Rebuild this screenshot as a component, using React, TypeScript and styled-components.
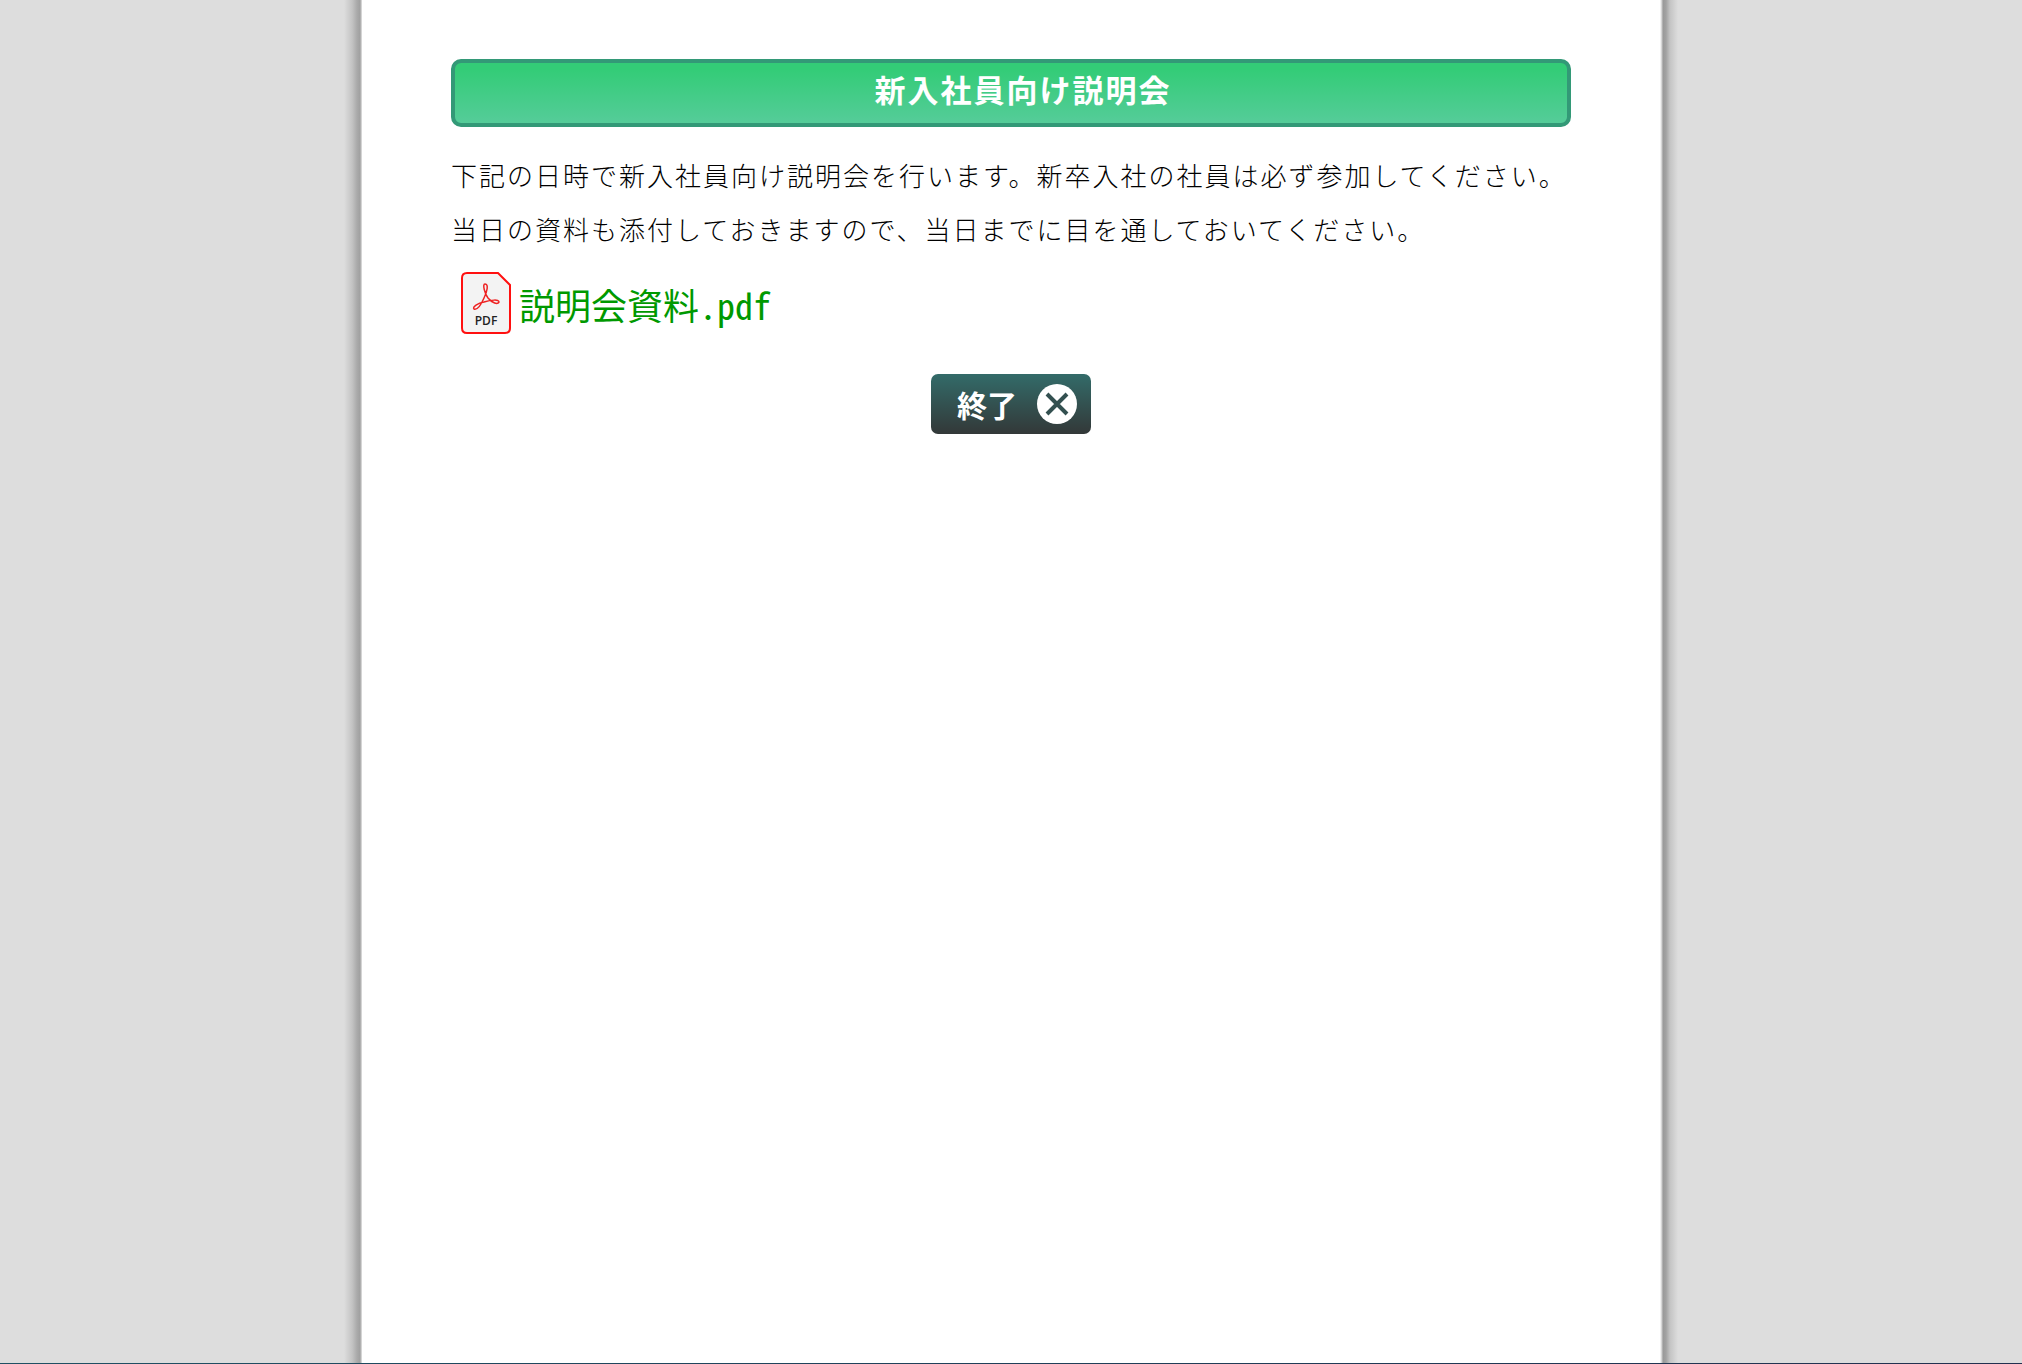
import React from "react";
import styled, { createGlobalStyle } from "styled-components";

const GlobalStyle = createGlobalStyle`
  *, *::before, *::after { box-sizing: border-box; }
  body {
    margin: 0;
    background: #dddddd;
    color: #000000;
    font-family: "Noto Sans CJK JP", sans-serif;
    letter-spacing: 2px;
  }
`;

const Page = styled.div`
  display: flex;
  justify-content: center;
  min-height: 100vh;
  border-bottom: 1px solid;
  border-image: linear-gradient(to right, #1f5063, #22304f) 1;
`;

const edgeShades = {
  left: "#e8e8e8 0, #c0c0c0 1px, #a0a0a0 2px, #aaaaaa 5px, #c4c4c4 10px, #dddddd 18px",
  right: "#ffffff 0, #c8c8c8 2px, #999999 3px, #a2a2a2 6px, #c4c4c4 10px, #dddddd 18px",
};

const Edge = styled.div<{ $side: "left" | "right" }>`
  flex: 0 0 18px;
  background: linear-gradient(
    to ${({ $side }) => $side},
    ${({ $side }) => edgeShades[$side]}
  );
`;

const Sheet = styled.main`
  display: flex;
  flex-direction: column;
  flex: 0 1 1298px;
  min-width: 0;
  padding: 59px 89px;
  background: #ffffff;
`;

const Title = styled.h1`
  margin: 0;
  padding: 4px 0 12px 24px;
  border: 4px solid #339977;
  border-radius: 10px;
  background: linear-gradient(#33cc77 10%, #55cc99);
  color: #ffffff;
  font-size: 31px;
  font-weight: 700;
  line-height: 44px;
  text-align: center;
`;

const Message = styled.p`
  margin: 21px 0 0;
  font-size: 26px;
  font-weight: 300;
  line-height: 54px;
`;

const FileLink = styled.a`
  display: flex;
  align-items: center;
  align-self: flex-start;
  gap: 8px;
  margin: 14px 0 0 10px;
  color: #009900;
  font-family: "Noto Sans Mono CJK JP", "Noto Sans CJK JP", monospace;
  font-size: 36px;
  line-height: 64px;
  letter-spacing: 0;
  text-decoration: none;
`;

const FileName = styled.span`
  padding-top: 2px;
`;

const Actions = styled.div`
  display: flex;
  justify-content: center;
  margin-top: 38px;
`;

const CloseButton = styled.button`
  display: flex;
  align-items: center;
  justify-content: space-between;
  width: 160px;
  height: 60px;
  padding: 0 14px 0 26px;
  border: 0;
  border-radius: 7px;
  background: linear-gradient(#336b69, #333838);
  color: #ffffff;
  font-family: inherit;
  font-size: 30px;
  font-weight: 700;
  cursor: pointer;
`;

const PdfIcon = () => (
  <svg width="50" height="64" viewBox="0 0 50 64" aria-hidden="true">
    <path
      d="M6 2H37L49 14V57Q49 62 44 62H6Q1 62 1 57V7Q1 2 6 2Z"
      fill="#f3f3f3"
      stroke="#ff1010"
      strokeWidth="2"
    />
    <path
      d="M24 13C28 13 26 21 23 27C20 34 16 39 13 38C11 36 17 32 23 31C30 29 38 28 38 31C37 34 31 32 27 27C24 23 21 13 24 13Z"
      fill="none"
      stroke="#ee2222"
      strokeWidth="1.500"
    />
    <text
      x="25"
      y="54"
      textAnchor="middle"
      fontFamily="'Open Sans', sans-serif"
      fontSize="12"
      fontWeight="600"
      letterSpacing="0"
      fill="#222222"
    >
      PDF
    </text>
  </svg>
);

const CloseIcon = () => (
  <svg width="40" height="40" viewBox="0 0 40 40" aria-hidden="true">
    <circle cx="20" cy="20" r="20" fill="#ffffff" />
    <path d="M10 10L30 30M30 10L10 30" stroke="#335050" strokeWidth="4" />
  </svg>
);

export default function App() {
  return (
    <>
      <GlobalStyle />
      <Page lang="ja">
        <Edge $side="left" />
        <Sheet>
          <Title>新入社員向け説明会</Title>
          <Message>
            下記の日時で新入社員向け説明会を行います。新卒入社の社員は必ず参加してください。
            <br />
            当日の資料も添付しておきますので、当日までに目を通しておいてください。
          </Message>
          <FileLink href="#">
            <PdfIcon />
            <FileName>説明会資料.pdf</FileName>
          </FileLink>
          <Actions>
            <CloseButton type="button">
              終了
              <CloseIcon />
            </CloseButton>
          </Actions>
        </Sheet>
        <Edge $side="right" />
      </Page>
    </>
  );
}
